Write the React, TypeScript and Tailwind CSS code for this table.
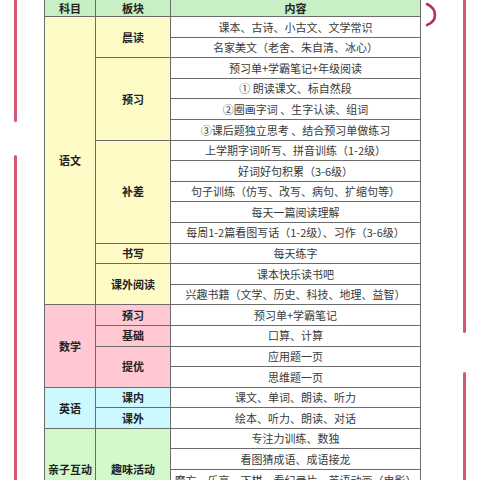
import React from 'react'

type Cell = { text: string; row: number; span?: number }

const FONT = { fontFamily: '"Noto Sans CJK SC", "Noto Sans", sans-serif' }

const SUBJECTS: (Cell & { bg: string })[] = [
  { text: '语文', row: 2, span: 14, bg: 'bg-[#fffbc6]' },
  { text: '数学', row: 16, span: 4, bg: 'bg-[#ffc8d2]' },
  { text: '英语', row: 20, span: 2, bg: 'bg-[#ccf8ff]' },
  { text: '亲子互动', row: 22, span: 4, bg: 'bg-[#d3f8cb]' },
]

const BLOCKS: (Cell & { bg: string })[] = [
  { text: '晨读', row: 2, span: 2, bg: 'bg-[#fffbc6]' },
  { text: '预习', row: 4, span: 4, bg: 'bg-[#fffbc6]' },
  { text: '补差', row: 8, span: 5, bg: 'bg-[#fffbc6]' },
  { text: '书写', row: 13, bg: 'bg-[#fffbc6]' },
  { text: '课外阅读', row: 14, span: 2, bg: 'bg-[#fffbc6]' },
  { text: '预习', row: 16, bg: 'bg-[#ffc8d2]' },
  { text: '基础', row: 17, bg: 'bg-[#ffc8d2]' },
  { text: '提优', row: 18, span: 2, bg: 'bg-[#ffc8d2]' },
  { text: '课内', row: 20, bg: 'bg-[#ccf8ff]' },
  { text: '课外', row: 21, bg: 'bg-[#ccf8ff]' },
  { text: '趣味活动', row: 22, span: 4, bg: 'bg-[#d3f8cb]' },
]

const CONTENT = [
  '课本、古诗、小古文、文学常识',
  '名家美文（老舍、朱自清、冰心）',
  '预习单+学霸笔记+年级阅读',
  '① 朗读课文、标自然段',
  '②圈画字词 、生字认读、组词',
  '③课后题独立思考 、结合预习单做练习',
  '上学期字词听写、拼音训练（1-2级）',
  '好词好句积累（3-6级）',
  '句子训练（仿写、改写、病句、扩缩句等）',
  '每天一篇阅读理解',
  '每周1-2篇看图写话（1-2级）、习作（3-6级）',
  '每天练字',
  '课本快乐读书吧',
  '兴趣书籍（文学、历史、科技、地理、益智）',
  '预习单+学霸笔记',
  '口算、计算',
  '应用题一页',
  '思维题一页',
  '课文、单词、朗读、听力',
  '绘本、听力、朗读、对话',
  '专注力训练、数独',
  '看图猜成语、成语接龙',
  '魔方、乐高、下棋、看纪录片、英语动画（电影）',
  '户外运动、亲子阅读',
]

function LabelCell({ cell, col }: { cell: Cell & { bg: string }; col: number }) {
  return (
    <div
      className={`${cell.bg} flex items-center justify-center text-[11px] font-bold text-[#222]`}
      style={{ gridColumn: col, gridRow: `${cell.row} / span ${cell.span ?? 1}` }}
    >
      {cell.text}
    </div>
  )
}

export default function App() {
  return (
    <div className="w-[480px] h-[480px] bg-white overflow-hidden flex" style={FONT}>
      {/* left margin rule */}
      <div className="w-[44px] shrink-0 pl-[14px] flex flex-col">
        <div className="w-[3px] h-[122px] bg-[#d4566f] rounded-b-full" />
        <div className="w-[3px] mt-[33px] flex-1 bg-[#d4566f] rounded-t-full" />
      </div>

      <div className="w-[377px] shrink-0 h-[480px] overflow-hidden">
        <div className="grid grid-cols-[50px_74px_249px] grid-rows-[16px_repeat(24,19.6px)] gap-px bg-[#6b6b6b] px-px pb-px">
          <div className="bg-[#c9f0c4] flex items-center justify-center text-[11px] font-bold text-[#222]">科目</div>
          <div className="bg-[#c9f0c4] flex items-center justify-center text-[11px] font-bold text-[#222]">板块</div>
          <div className="bg-[#c9f0c4] flex items-center justify-center text-[11px] font-bold text-[#222]">内容</div>

          {SUBJECTS.map((c) => (
            <LabelCell key={c.text} cell={c} col={1} />
          ))}
          {BLOCKS.map((c) => (
            <LabelCell key={c.text + c.row} cell={c} col={2} />
          ))}
          {CONTENT.map((t, i) => (
            <div
              key={i}
              className="bg-white flex items-center justify-center text-[11px] text-[#3a3a3a] whitespace-nowrap"
              style={{ gridColumn: 3, gridRow: i + 2 }}
            >
              {t}
            </div>
          ))}
        </div>
      </div>

      {/* right margin: hook mark and rule */}
      <div className="flex-1 flex">
        <div className="w-[42px] pl-[3px] pt-[2px]">
          <svg width="14" height="26" viewBox="0 0 14 26" fill="none">
            <path d="M3 2 Q11 6 11 13 Q11 20 3 23" stroke="#b4344b" strokeWidth="2.6" strokeLinecap="round" />
          </svg>
        </div>
        <div className="flex flex-col">
          <div className="w-[3px] h-[333px] bg-[#d4566f] rounded-b-full" />
          <div className="w-[3px] mt-[39px] flex-1 bg-[#d4566f] rounded-t-full" />
        </div>
      </div>
    </div>
  )
}
